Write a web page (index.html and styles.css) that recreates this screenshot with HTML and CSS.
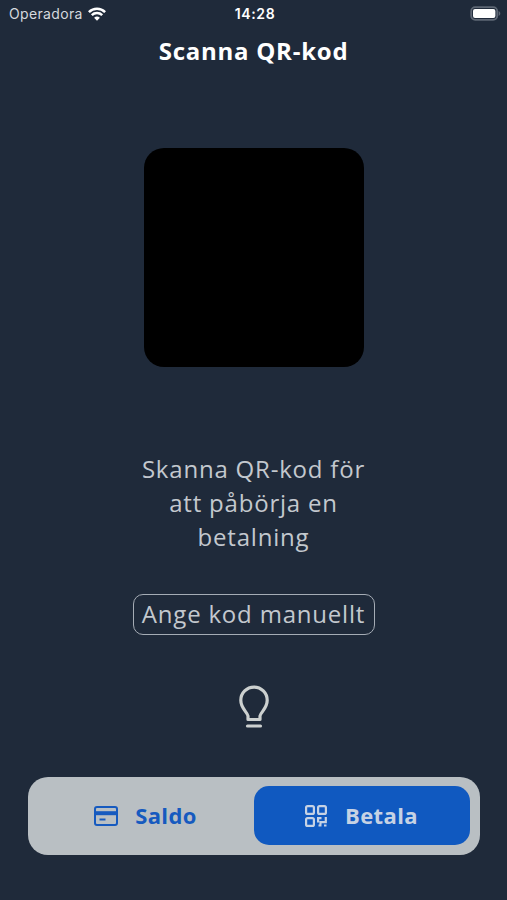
FILE: index.html
```
<!DOCTYPE html>
<html lang="sv">
<head>
  <meta charset="UTF-8">
  <meta name="viewport" content="width=device-width, initial-scale=1">
  <title>Scanna QR-kod</title>
  <link rel="stylesheet" href="styles.css">
</head>
<body>

  <div class="status-bar">
    <div class="carrier">
      <span>Operadora</span>
      <svg class="wifi" viewBox="0 0 18 14" fill="none" stroke="#fff" stroke-width="2.5">
        <path d="M0.9 5.1a11.6 11.6 0 0 1 16.2 0"/>
        <path d="M3.8 8.2a7.4 7.4 0 0 1 10.4 0"/>
        <path d="M9 13.8L6.1 10.8a4.2 4.2 0 0 1 5.8 0z" fill="#fff" stroke="none"/>
      </svg>
    </div>
    <div class="time">14:28</div>
    <div class="battery">
      <svg viewBox="0 0 31 15">
        <rect x="1.2" y="1.2" width="26" height="12.6" rx="4" fill="none" stroke="#5e6774" stroke-width="1.8"/>
        <rect x="3" y="3" width="22.4" height="9" rx="2" fill="#fff"/>
        <path d="M28.6 5v5c1-.4 1.7-1.4 1.7-2.5S29.6 5.4 28.6 5z" fill="#5e6774"/>
      </svg>
    </div>
  </div>

  <h1>Scanna QR-kod</h1>

  <div class="camera"></div>

  <p class="info">Skanna QR-kod för<br>att påbörja en<br>betalning</p>

  <button class="manual">Ange kod manuellt</button>

  <svg class="bulb" viewBox="0 0 32 46" fill="none" stroke="#ccd0cf" stroke-width="3.2" stroke-linejoin="round" stroke-linecap="round">
    <path d="M10 35.5V32C9 27.500 2.800 24.500 2.800 16.300a13.200 13.200 0 0 1 26.400 0C29.200 24.500 23 27.500 22 32v3.500z"/>
    <path d="M9.5 42h13"/>
  </svg>

  <div class="tabs">
    <div class="tab">
      <svg class="card-icon" viewBox="0 0 24 20" fill="none" stroke="currentColor" stroke-width="2">
        <rect x="1" y="1" width="22" height="18" rx="2"/>
        <path d="M1 7.2h22" stroke-width="4"/>
        <path d="M5.5 13.5h6"/>
      </svg>
      <span>Saldo</span>
    </div>
    <div class="tab active">
      <svg class="qr-icon" viewBox="0 0 22 22" fill="none" stroke="currentColor" stroke-width="2.2">
        <rect x="1.1" y="1.1" width="7.8" height="7.8" rx="1.5"/>
        <rect x="13.1" y="1.1" width="7.8" height="7.8" rx="1.5"/>
        <rect x="1.1" y="13.1" width="7.8" height="7.8" rx="1.5"/>
        <path d="M12 13.2h4.5M13.1 14v3.5M20.8 12v5.2h-4.3M15.5 16v3.5M13.500 20.500h3M19 20.500h2.500"/>
      </svg>
      <span>Betala</span>
    </div>
  </div>

</body>
</html>
```

FILE: styles.css
```
* {
  box-sizing: border-box;
}
body {
  margin: 0;
  height: 900px;
  display: flex;
  flex-direction: column;
  align-items: center;
  background: #1f2a3a;
  color: #c3c8ce;
  font-family: "Open Sans", "Noto Sans", sans-serif;
  overflow: hidden;
}
.status-bar {
  width: 100%;
  height: 27px;
  padding: 0 6px 0 9px;
  display: grid;
  grid-template-columns: 1fr auto 1fr;
  align-items: center;
  color: #fff;
  font-family: Inter, sans-serif;
  font-size: 14px;
}
.carrier {
  display: flex;
  align-items: center;
  gap: 5px;
  color: #d5d9de;
  letter-spacing: 0.35px;
}
.wifi {
  width: 18px;
  height: 14px;
}
.time {
  font-weight: 600;
  letter-spacing: 0.6px;
}
.battery {
  display: flex;
  justify-content: flex-end;
}
.battery svg {
  width: 31px;
  height: 15px;
}
h1 {
  margin: 7px 0 0;
  color: #fff;
  font-size: 24px;
  line-height: 34px;
  font-weight: 700;
  letter-spacing: 0.75px;
}
.camera {
  width: 220px;
  height: 219px;
  margin-top: 80px;
  border-radius: 20px;
  background: #000;
}
.info {
  margin: 85px 0 0;
  font-size: 24px;
  line-height: 34px;
  letter-spacing: 0.8px;
  text-align: center;
}
.manual {
  width: 242px;
  height: 41px;
  margin-top: 40px;
  padding: 0 0 2px;
  border: 1px solid #a5acb5;
  border-radius: 10px;
  background: none;
  color: inherit;
  font-family: inherit;
  font-size: 24px;
  line-height: 34px;
  letter-spacing: 0.8px;
}
.bulb {
  width: 32px;
  height: 46px;
  margin-top: 49px;
}
.tabs {
  width: 452px;
  height: 78px;
  margin-top: 47px;
  padding: 9px 10px 10px;
  display: flex;
  border-radius: 20px;
  background: #b9bfc3;
}
.tab {
  flex: 1;
  display: flex;
  align-items: center;
  justify-content: center;
  gap: 17px;
  border-radius: 15px;
  color: #165abf;
  font-size: 22px;
  font-weight: 700;
  letter-spacing: 0.4px;
}
.tab span {
  padding-bottom: 2px;
}
.active {
  gap: 18px;
  background: #1059c0;
  color: #c6d2e4;
}
.card-icon {
  width: 24px;
  height: 20px;
}
.qr-icon {
  width: 22px;
  height: 22px;
}
```
